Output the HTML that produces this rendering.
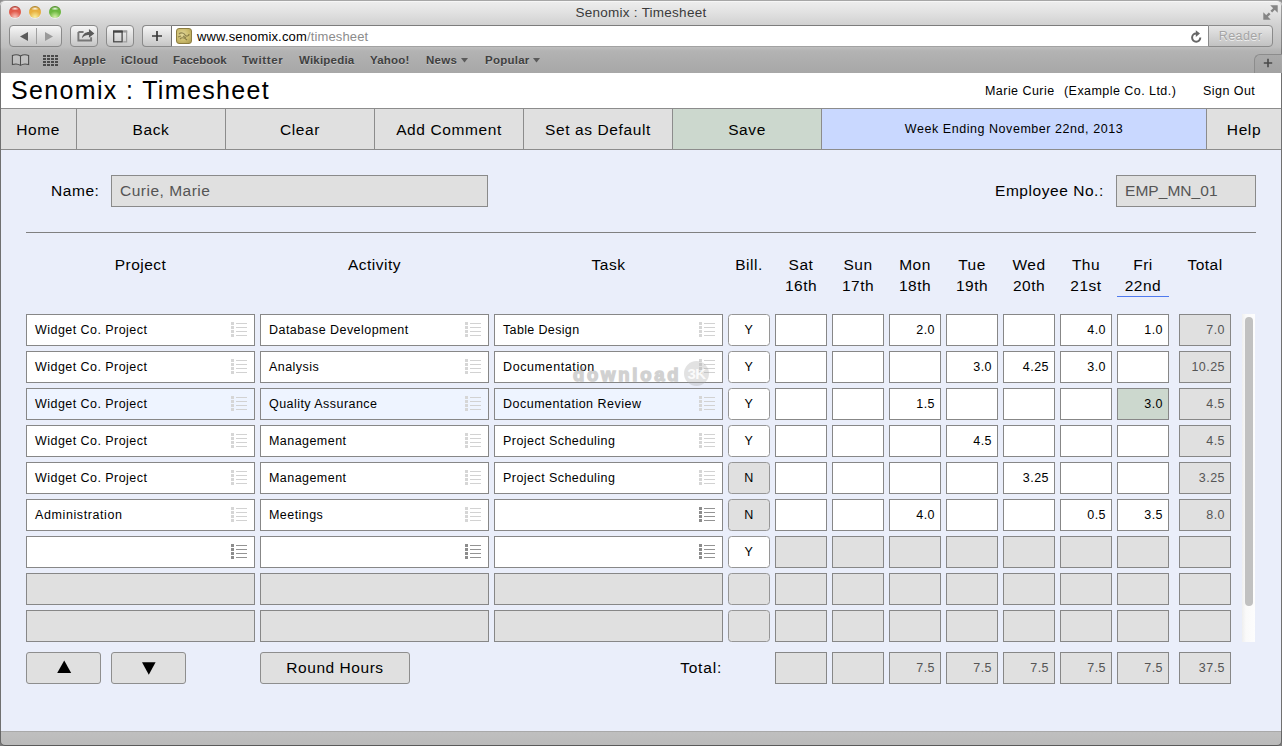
<!DOCTYPE html><html><head><meta charset="utf-8"><title>Senomix : Timesheet</title><style>
*{box-sizing:border-box;margin:0;padding:0}
html,body{width:1282px;height:746px;overflow:hidden;background:#eaeefa;font-family:"Liberation Sans",sans-serif;color:#000}
.abs{position:absolute}
#chrome{position:absolute;left:0;top:0;width:1282px;height:73px;background:linear-gradient(#eeeeee 0px,#e2e2e2 11px,#d1d1d1 24px,#bebebe 46px,#b3b3b3 50px,#a7a7a7 72px);border-top:1px solid #a6a6a6;border-radius:5px 5px 0 0;box-shadow:inset 0 1px 0 #f6f6f6,inset 1px 0 0 rgba(0,0,0,.32),inset -1px 0 0 rgba(0,0,0,.32)}
#chrome .title{position:absolute;left:0;width:1282px;top:4px;text-align:center;font-size:13.5px;letter-spacing:.25px;color:#3a3a3a}
.tl{position:absolute;top:5px;width:12px;height:12px;border-radius:6px}
.tb{position:absolute;top:24px;height:22px;border:1px solid #8a8a8a;border-radius:4px;background:linear-gradient(#f6f6f6,#c6c6c6)}
#url{position:absolute;left:172px;top:24px;width:1036px;height:22px;background:#fff;border-top:1px solid #7c7c7c;border-bottom:1px solid #a2a2a2}
#url span{position:absolute;left:25px;top:3px;font-size:13px;letter-spacing:.15px;color:#000;white-space:nowrap}
#url span i{font-style:normal;color:#8c8c8c}
#bm{position:absolute;left:0;top:49px;width:1282px;height:23px}
#bm span{position:absolute;top:4px;font-size:11.5px;font-weight:bold;color:#404040;letter-spacing:.25px;white-space:nowrap;text-shadow:0 1px 0 rgba(255,255,255,.35)}
#hdr{position:absolute;left:1px;top:73px;width:1280px;height:35px;background:#fff}
#hdr .t{position:absolute;left:10px;top:3px;font-size:25px;letter-spacing:1.35px;white-space:nowrap}
#hdr .u{position:absolute;top:11px;font-size:12.5px;letter-spacing:.45px;white-space:nowrap}
#menu{position:absolute;left:1px;top:108px;width:1280px;height:42px;background:#e0e0e0;border-top:1px solid #8c8c8c;border-bottom:1px solid #8c8c8c}
#menu div{position:absolute;top:0;height:40px;line-height:42px;text-align:center;font-size:15.5px;letter-spacing:.6px;border-right:1px solid #8c8c8c;white-space:nowrap}
.lbl{position:absolute;font-size:15.5px;letter-spacing:.55px;white-space:nowrap}
.fld{position:absolute;height:32px;border:1px solid #8a8a8a;background:#e0e0e0;font-size:15.5px;letter-spacing:.5px;color:#555;line-height:29px;padding-left:8px;white-space:nowrap}
.h{position:absolute;font-size:15.5px;letter-spacing:.5px;text-align:center;white-space:nowrap;line-height:21px}
.c{position:absolute;height:32px;border:1px solid #878787;background:#fff;font-size:12.5px;letter-spacing:.45px;line-height:30px;white-space:nowrap;overflow:hidden}
.c.t{padding-left:8px}
.c.n{text-align:right;padding-right:5px}
.c.b{text-align:center;border-radius:3.5px;border-color:#969696;color:#000}
.c.g{background:#e0e0e0;color:#555}
.c.b.g{color:#000}
.c.hl{background:#eef4ff}
.c.gr{background:#ccd8ce}
.ic{position:absolute;right:7px;top:7px;width:16px;height:16px}
.btn{position:absolute;height:32px;border:1px solid #8e8e8e;border-radius:3px;background:#e0e0e0;text-align:center;line-height:30px;font-size:15.5px;letter-spacing:.55px;white-space:nowrap}
</style></head><body>
<div class="abs" style="left:0;top:0;width:1282px;height:8px;background:#8f8f8f"></div>
<div id="chrome">
<div class="title">Senomix : Timesheet</div>
<div class="tl" style="left:9px;background:radial-gradient(ellipse 4px 1.8px at 50% 22%,rgba(255,255,255,.9),rgba(255,255,255,0)),radial-gradient(circle at 50% 92%,#f7c4bc 0%,#e15a4b 48%,#e15a4b 62%,#8f2c24 100%);box-shadow:0 1px 0 rgba(255,255,255,.5)"></div>
<div class="tl" style="left:29px;background:radial-gradient(ellipse 4px 1.8px at 50% 22%,rgba(255,255,255,.9),rgba(255,255,255,0)),radial-gradient(circle at 50% 92%,#f8f0a0 0%,#e8b040 48%,#e8b040 62%,#8a6410 100%);box-shadow:0 1px 0 rgba(255,255,255,.5)"></div>
<div class="tl" style="left:49px;background:radial-gradient(ellipse 4px 1.8px at 50% 22%,rgba(255,255,255,.9),rgba(255,255,255,0)),radial-gradient(circle at 50% 92%,#d4f0a8 0%,#6cb840 48%,#6cb840 62%,#3c7218 100%);box-shadow:0 1px 0 rgba(255,255,255,.5)"></div>
<div class="tb" style="left:9px;width:53px"><div class="abs" style="left:26px;top:2px;width:1px;height:16px;background:#a0a0a0"></div><svg class="abs" style="left:9px;top:6px" width="10" height="9" viewBox="0 0 10 9"><path d="M9 0 L9 9 L1 4.5Z" fill="#5a5a5a"/></svg><svg class="abs" style="left:34px;top:6px" width="10" height="9" viewBox="0 0 10 9"><path d="M1 0 L1 9 L9 4.5Z" fill="#9a9a9a"/></svg></div>
<div class="tb" style="left:70px;width:28px"><svg class="abs" style="left:5.5px;top:2px" width="18.5" height="14" viewBox="0 0 17 13"><path d="M1.2 3.8 H6 M1.2 3.8 V11.6 H13 V8.5" fill="none" stroke="#777" stroke-width="1.8"/><path d="M4.5 9.5 C5 5.5 8 3.6 11 3.6 V1 L16 5 L11 9 V6.4 C8.5 6.3 6.3 7 4.5 9.5Z" fill="#5a5a5a"/></svg></div>
<div class="tb" style="left:106px;width:28px"><svg class="abs" style="left:6px;top:3.5px" width="15" height="13" viewBox="0 0 15 13"><rect x="0.7" y="1.6" width="8.4" height="10.2" fill="none" stroke="#4a4a4a" stroke-width="1.3"/><rect x="0" y="0.3" width="9.8" height="2.3" fill="#444"/><path d="M10.2 1.4 H13.6 V11.8 H10.2" fill="none" stroke="#9c9c9c" stroke-width="1.2"/><rect x="10.2" y="0.3" width="4" height="2.3" fill="#9c9c9c"/></svg></div>
<div class="tb" style="left:142px;width:30px;border-radius:4px 0 0 4px;border-right-color:#707070"><svg class="abs" style="left:8.5px;top:5px" width="10" height="10" viewBox="0 0 10 10"><path d="M5 0 V10 M0 5 H10" stroke="#3a3a3a" stroke-width="1.7"/></svg></div>
<div id="url"><div class="abs" style="left:4px;top:2px;width:16px;height:16px;border-radius:3px;background:radial-gradient(circle at 40% 40%,#e2d79a,#cbbb6c 55%,#a8974e);border:1px solid #8d7d40;overflow:hidden"><svg width="14" height="13" viewBox="0 0 14 13"><path d="M2 4 C4 2 7 3 8 5 S12 6 12 4 M3 9 C5 7 8 8 10 10 M6 6 L9 8 M1 7 L4 6" fill="none" stroke="#5e5428" stroke-width="1.2" opacity=".6"/></svg></div><span>www.senomix.com<i>/timesheet</i></span><svg class="abs" style="left:1018px;top:4px" width="13" height="14" viewBox="0 0 13 14"><path d="M10.3 7.6 A4.1 4.1 0 1 1 6.2 3.5" fill="none" stroke="#666" stroke-width="2"/><path d="M5.8 0.2 L10 3.6 L5.8 6.9Z" fill="#666"/></svg></div>
<div class="tb" style="left:1208px;width:65px;border-radius:0 4px 4px 0;background:linear-gradient(#e6e6e6,#c2c2c2);font-size:12.5px;letter-spacing:.4px;color:#a4a4a4;text-align:center;line-height:20px;text-shadow:0 1px 0 rgba(255,255,255,.7)">Reader</div>
<svg class="abs" style="left:1263px;top:4px" width="15" height="15" viewBox="0 0 15 15"><path d="M7.2 0.3 H14.7 V7.8 Z M0.3 7.2 V14.7 H7.8 Z" fill="#858585"/><path d="M12 3 L8.3 6.7 M3 12 L6.7 8.3" stroke="#858585" stroke-width="2.4"/></svg>
<div id="bm">
<svg class="abs" style="left:11px;top:4px" width="19" height="13" viewBox="0 0 19 13"><path d="M9.5 2 C7.2 0.5 3.8 0.5 1.4 1.4 V10.6 C3.8 9.8 7.2 9.8 9.5 11.4 C11.8 9.8 15.2 9.8 17.6 10.6 V1.4 C15.2 0.5 11.8 0.5 9.5 2 V11.4" fill="rgba(255,255,255,.22)" stroke="#4c4c4c" stroke-width="1.05"/></svg>
<svg class="abs" style="left:43px;top:4.5px" width="16" height="12" viewBox="0 0 16 12"><rect x="0" y="0" width="3" height="2" fill="#4a4a4a"/><rect x="4" y="0" width="3" height="2" fill="#4a4a4a"/><rect x="8" y="0" width="3" height="2" fill="#4a4a4a"/><rect x="12" y="0" width="3" height="2" fill="#4a4a4a"/><rect x="0" y="3" width="3" height="2" fill="#4a4a4a"/><rect x="4" y="3" width="3" height="2" fill="#4a4a4a"/><rect x="8" y="3" width="3" height="2" fill="#4a4a4a"/><rect x="12" y="3" width="3" height="2" fill="#4a4a4a"/><rect x="0" y="6" width="3" height="2" fill="#4a4a4a"/><rect x="4" y="6" width="3" height="2" fill="#4a4a4a"/><rect x="8" y="6" width="3" height="2" fill="#4a4a4a"/><rect x="12" y="6" width="3" height="2" fill="#4a4a4a"/><rect x="0" y="9" width="3" height="2" fill="#4a4a4a"/><rect x="4" y="9" width="3" height="2" fill="#4a4a4a"/><rect x="8" y="9" width="3" height="2" fill="#4a4a4a"/><rect x="12" y="9" width="3" height="2" fill="#4a4a4a"/></svg>
<span style="left:73px;letter-spacing:0.25px">Apple</span>
<span style="left:121px;letter-spacing:0.25px">iCloud</span>
<span style="left:173px;letter-spacing:0px">Facebook</span>
<span style="left:242px;letter-spacing:0.65px">Twitter</span>
<span style="left:299px;letter-spacing:0.2px">Wikipedia</span>
<span style="left:370px;letter-spacing:0.2px">Yahoo!</span>
<span style="left:426px;letter-spacing:0.25px">News</span>
<span style="left:485px;letter-spacing:0.25px">Popular</span>
<svg class="abs" style="left:461px;top:8px" width="7" height="5" viewBox="0 0 7 5"><path d="M0 0 H7 L3.5 4.6Z" fill="#5a5a5a"/></svg>
<svg class="abs" style="left:533px;top:8px" width="7" height="5" viewBox="0 0 7 5"><path d="M0 0 H7 L3.5 4.6Z" fill="#5a5a5a"/></svg>
<div class="abs" style="left:1254px;top:4px;width:28px;height:19px;border-left:1px solid #8c8c8c;border-top:1px solid #8c8c8c;border-radius:6px 0 0 0;background:linear-gradient(#aaa,#a2a2a2)"><svg class="abs" style="left:8px;top:3px" width="10" height="10" viewBox="0 0 10 10"><path d="M5 0.8 V9.2 M0.8 5 H9.2" stroke="#4a4a4a" stroke-width="1.6"/></svg></div>
</div>
<div class="abs" style="left:0;top:72px;width:1282px;height:1px;background:#8e8e8e"></div>
</div>
<div id="hdr"><div class="t">Senomix : Timesheet</div><div class="u" style="left:984px">Marie Curie</div><div class="u" style="left:1063px">(Example Co. Ltd.)</div><div class="u" style="left:1202px">Sign Out</div></div>
<div id="menu">
<div style="left:-1px;width:77px;">Home</div>
<div style="left:76px;width:149px;">Back</div>
<div style="left:225px;width:149px;">Clear</div>
<div style="left:374px;width:149px;">Add Comment</div>
<div style="left:523px;width:149px;">Set as Default</div>
<div style="left:672px;width:149px;background:#ccd8ce;">Save</div>
<div style="left:821px;width:385px;background:#c9d8ff;font-size:12.5px;letter-spacing:.55px;line-height:40px;">Week Ending November 22nd, 2013</div>
<div style="left:1206px;width:74px;border-right:0;">Help</div>
</div>
<div class="lbl" style="left:51px;top:182px">Name:</div>
<div class="fld" style="left:111px;top:175px;width:377px">Curie, Marie</div>
<div class="lbl" style="left:995px;top:182px">Employee No.:</div>
<div class="fld" style="left:1116px;top:175px;width:140px;letter-spacing:.05px">EMP_MN_01</div>
<div class="abs" style="left:26px;top:232px;width:1230px;height:1px;background:#808080"></div>
<div class="h" style="left:26px;top:254px;width:229px">Project</div>
<div class="h" style="left:260px;top:254px;width:229px">Activity</div>
<div class="h" style="left:494px;top:254px;width:229px">Task</div>
<div class="h" style="left:728px;top:254px;width:42px">Bill.</div>
<div class="h" style="left:775px;top:254px;width:52px">Sat<br>16th</div>
<div class="h" style="left:832px;top:254px;width:52px">Sun<br>17th</div>
<div class="h" style="left:889px;top:254px;width:52px">Mon<br>18th</div>
<div class="h" style="left:946px;top:254px;width:52px">Tue<br>19th</div>
<div class="h" style="left:1003px;top:254px;width:52px">Wed<br>20th</div>
<div class="h" style="left:1060px;top:254px;width:52px">Thu<br>21st</div>
<div class="h" style="left:1117px;top:254px;width:52px">Fri<br>22nd</div>
<div class="h" style="left:1179px;top:254px;width:52px">Total</div>
<div class="abs" style="left:1117px;top:296px;width:52px;height:1px;background:#4f7aee"></div>
<div class="c t" style="left:26px;top:314px;width:229px">Widget Co. Project<svg class="ic" viewBox="0 0 16 16" shape-rendering="crispEdges"><rect x="0" y="0" width="3" height="3" fill="#d6d6d6"/><rect x="5" y="1" width="11" height="1" fill="#d2d2d2"/><rect x="0" y="4" width="3" height="3" fill="#d6d6d6"/><rect x="5" y="5" width="11" height="1" fill="#d2d2d2"/><rect x="0" y="8" width="3" height="3" fill="#d6d6d6"/><rect x="5" y="9" width="11" height="1" fill="#d2d2d2"/><rect x="0" y="12" width="3" height="3" fill="#d6d6d6"/><rect x="5" y="13" width="11" height="1" fill="#d2d2d2"/></svg></div>
<div class="c t" style="left:260px;top:314px;width:229px">Database Development<svg class="ic" viewBox="0 0 16 16" shape-rendering="crispEdges"><rect x="0" y="0" width="3" height="3" fill="#d6d6d6"/><rect x="5" y="1" width="11" height="1" fill="#d2d2d2"/><rect x="0" y="4" width="3" height="3" fill="#d6d6d6"/><rect x="5" y="5" width="11" height="1" fill="#d2d2d2"/><rect x="0" y="8" width="3" height="3" fill="#d6d6d6"/><rect x="5" y="9" width="11" height="1" fill="#d2d2d2"/><rect x="0" y="12" width="3" height="3" fill="#d6d6d6"/><rect x="5" y="13" width="11" height="1" fill="#d2d2d2"/></svg></div>
<div class="c t" style="left:494px;top:314px;width:229px;letter-spacing:0.35px">Table Design<svg class="ic" viewBox="0 0 16 16" shape-rendering="crispEdges"><rect x="0" y="0" width="3" height="3" fill="#d6d6d6"/><rect x="5" y="1" width="11" height="1" fill="#d2d2d2"/><rect x="0" y="4" width="3" height="3" fill="#d6d6d6"/><rect x="5" y="5" width="11" height="1" fill="#d2d2d2"/><rect x="0" y="8" width="3" height="3" fill="#d6d6d6"/><rect x="5" y="9" width="11" height="1" fill="#d2d2d2"/><rect x="0" y="12" width="3" height="3" fill="#d6d6d6"/><rect x="5" y="13" width="11" height="1" fill="#d2d2d2"/></svg></div>
<div class="c b" style="left:728px;top:314px;width:42px;">Y</div>
<div class="c n" style="left:775px;top:314px;width:52px"></div>
<div class="c n" style="left:832px;top:314px;width:52px"></div>
<div class="c n" style="left:889px;top:314px;width:52px">2.0</div>
<div class="c n" style="left:946px;top:314px;width:52px"></div>
<div class="c n" style="left:1003px;top:314px;width:52px"></div>
<div class="c n" style="left:1060px;top:314px;width:52px">4.0</div>
<div class="c n" style="left:1117px;top:314px;width:52px">1.0</div>
<div class="c n g" style="left:1179px;top:314px;width:52px">7.0</div>
<div class="c t" style="left:26px;top:351px;width:229px">Widget Co. Project<svg class="ic" viewBox="0 0 16 16" shape-rendering="crispEdges"><rect x="0" y="0" width="3" height="3" fill="#d6d6d6"/><rect x="5" y="1" width="11" height="1" fill="#d2d2d2"/><rect x="0" y="4" width="3" height="3" fill="#d6d6d6"/><rect x="5" y="5" width="11" height="1" fill="#d2d2d2"/><rect x="0" y="8" width="3" height="3" fill="#d6d6d6"/><rect x="5" y="9" width="11" height="1" fill="#d2d2d2"/><rect x="0" y="12" width="3" height="3" fill="#d6d6d6"/><rect x="5" y="13" width="11" height="1" fill="#d2d2d2"/></svg></div>
<div class="c t" style="left:260px;top:351px;width:229px">Analysis<svg class="ic" viewBox="0 0 16 16" shape-rendering="crispEdges"><rect x="0" y="0" width="3" height="3" fill="#d6d6d6"/><rect x="5" y="1" width="11" height="1" fill="#d2d2d2"/><rect x="0" y="4" width="3" height="3" fill="#d6d6d6"/><rect x="5" y="5" width="11" height="1" fill="#d2d2d2"/><rect x="0" y="8" width="3" height="3" fill="#d6d6d6"/><rect x="5" y="9" width="11" height="1" fill="#d2d2d2"/><rect x="0" y="12" width="3" height="3" fill="#d6d6d6"/><rect x="5" y="13" width="11" height="1" fill="#d2d2d2"/></svg></div>
<div class="c t" style="left:494px;top:351px;width:229px;letter-spacing:0.6px">Documentation<svg class="ic" viewBox="0 0 16 16" shape-rendering="crispEdges"><rect x="0" y="0" width="3" height="3" fill="#d6d6d6"/><rect x="5" y="1" width="11" height="1" fill="#d2d2d2"/><rect x="0" y="4" width="3" height="3" fill="#d6d6d6"/><rect x="5" y="5" width="11" height="1" fill="#d2d2d2"/><rect x="0" y="8" width="3" height="3" fill="#d6d6d6"/><rect x="5" y="9" width="11" height="1" fill="#d2d2d2"/><rect x="0" y="12" width="3" height="3" fill="#d6d6d6"/><rect x="5" y="13" width="11" height="1" fill="#d2d2d2"/></svg></div>
<div class="c b" style="left:728px;top:351px;width:42px;">Y</div>
<div class="c n" style="left:775px;top:351px;width:52px"></div>
<div class="c n" style="left:832px;top:351px;width:52px"></div>
<div class="c n" style="left:889px;top:351px;width:52px"></div>
<div class="c n" style="left:946px;top:351px;width:52px">3.0</div>
<div class="c n" style="left:1003px;top:351px;width:52px">4.25</div>
<div class="c n" style="left:1060px;top:351px;width:52px">3.0</div>
<div class="c n" style="left:1117px;top:351px;width:52px"></div>
<div class="c n g" style="left:1179px;top:351px;width:52px">10.25</div>
<div class="c t hl" style="left:26px;top:388px;width:229px">Widget Co. Project<svg class="ic" viewBox="0 0 16 16" shape-rendering="crispEdges"><rect x="0" y="0" width="3" height="3" fill="#d6d6d6"/><rect x="5" y="1" width="11" height="1" fill="#d2d2d2"/><rect x="0" y="4" width="3" height="3" fill="#d6d6d6"/><rect x="5" y="5" width="11" height="1" fill="#d2d2d2"/><rect x="0" y="8" width="3" height="3" fill="#d6d6d6"/><rect x="5" y="9" width="11" height="1" fill="#d2d2d2"/><rect x="0" y="12" width="3" height="3" fill="#d6d6d6"/><rect x="5" y="13" width="11" height="1" fill="#d2d2d2"/></svg></div>
<div class="c t hl" style="left:260px;top:388px;width:229px">Quality Assurance<svg class="ic" viewBox="0 0 16 16" shape-rendering="crispEdges"><rect x="0" y="0" width="3" height="3" fill="#d6d6d6"/><rect x="5" y="1" width="11" height="1" fill="#d2d2d2"/><rect x="0" y="4" width="3" height="3" fill="#d6d6d6"/><rect x="5" y="5" width="11" height="1" fill="#d2d2d2"/><rect x="0" y="8" width="3" height="3" fill="#d6d6d6"/><rect x="5" y="9" width="11" height="1" fill="#d2d2d2"/><rect x="0" y="12" width="3" height="3" fill="#d6d6d6"/><rect x="5" y="13" width="11" height="1" fill="#d2d2d2"/></svg></div>
<div class="c t hl" style="left:494px;top:388px;width:229px;letter-spacing:0.5px">Documentation Review<svg class="ic" viewBox="0 0 16 16" shape-rendering="crispEdges"><rect x="0" y="0" width="3" height="3" fill="#d6d6d6"/><rect x="5" y="1" width="11" height="1" fill="#d2d2d2"/><rect x="0" y="4" width="3" height="3" fill="#d6d6d6"/><rect x="5" y="5" width="11" height="1" fill="#d2d2d2"/><rect x="0" y="8" width="3" height="3" fill="#d6d6d6"/><rect x="5" y="9" width="11" height="1" fill="#d2d2d2"/><rect x="0" y="12" width="3" height="3" fill="#d6d6d6"/><rect x="5" y="13" width="11" height="1" fill="#d2d2d2"/></svg></div>
<div class="c b" style="left:728px;top:388px;width:42px;">Y</div>
<div class="c n" style="left:775px;top:388px;width:52px"></div>
<div class="c n" style="left:832px;top:388px;width:52px"></div>
<div class="c n" style="left:889px;top:388px;width:52px">1.5</div>
<div class="c n" style="left:946px;top:388px;width:52px"></div>
<div class="c n" style="left:1003px;top:388px;width:52px"></div>
<div class="c n" style="left:1060px;top:388px;width:52px"></div>
<div class="c n gr" style="left:1117px;top:388px;width:52px">3.0</div>
<div class="c n g" style="left:1179px;top:388px;width:52px">4.5</div>
<div class="c t" style="left:26px;top:425px;width:229px">Widget Co. Project<svg class="ic" viewBox="0 0 16 16" shape-rendering="crispEdges"><rect x="0" y="0" width="3" height="3" fill="#d6d6d6"/><rect x="5" y="1" width="11" height="1" fill="#d2d2d2"/><rect x="0" y="4" width="3" height="3" fill="#d6d6d6"/><rect x="5" y="5" width="11" height="1" fill="#d2d2d2"/><rect x="0" y="8" width="3" height="3" fill="#d6d6d6"/><rect x="5" y="9" width="11" height="1" fill="#d2d2d2"/><rect x="0" y="12" width="3" height="3" fill="#d6d6d6"/><rect x="5" y="13" width="11" height="1" fill="#d2d2d2"/></svg></div>
<div class="c t" style="left:260px;top:425px;width:229px">Management<svg class="ic" viewBox="0 0 16 16" shape-rendering="crispEdges"><rect x="0" y="0" width="3" height="3" fill="#d6d6d6"/><rect x="5" y="1" width="11" height="1" fill="#d2d2d2"/><rect x="0" y="4" width="3" height="3" fill="#d6d6d6"/><rect x="5" y="5" width="11" height="1" fill="#d2d2d2"/><rect x="0" y="8" width="3" height="3" fill="#d6d6d6"/><rect x="5" y="9" width="11" height="1" fill="#d2d2d2"/><rect x="0" y="12" width="3" height="3" fill="#d6d6d6"/><rect x="5" y="13" width="11" height="1" fill="#d2d2d2"/></svg></div>
<div class="c t" style="left:494px;top:425px;width:229px">Project Scheduling<svg class="ic" viewBox="0 0 16 16" shape-rendering="crispEdges"><rect x="0" y="0" width="3" height="3" fill="#d6d6d6"/><rect x="5" y="1" width="11" height="1" fill="#d2d2d2"/><rect x="0" y="4" width="3" height="3" fill="#d6d6d6"/><rect x="5" y="5" width="11" height="1" fill="#d2d2d2"/><rect x="0" y="8" width="3" height="3" fill="#d6d6d6"/><rect x="5" y="9" width="11" height="1" fill="#d2d2d2"/><rect x="0" y="12" width="3" height="3" fill="#d6d6d6"/><rect x="5" y="13" width="11" height="1" fill="#d2d2d2"/></svg></div>
<div class="c b" style="left:728px;top:425px;width:42px;">Y</div>
<div class="c n" style="left:775px;top:425px;width:52px"></div>
<div class="c n" style="left:832px;top:425px;width:52px"></div>
<div class="c n" style="left:889px;top:425px;width:52px"></div>
<div class="c n" style="left:946px;top:425px;width:52px">4.5</div>
<div class="c n" style="left:1003px;top:425px;width:52px"></div>
<div class="c n" style="left:1060px;top:425px;width:52px"></div>
<div class="c n" style="left:1117px;top:425px;width:52px"></div>
<div class="c n g" style="left:1179px;top:425px;width:52px">4.5</div>
<div class="c t" style="left:26px;top:462px;width:229px">Widget Co. Project<svg class="ic" viewBox="0 0 16 16" shape-rendering="crispEdges"><rect x="0" y="0" width="3" height="3" fill="#d6d6d6"/><rect x="5" y="1" width="11" height="1" fill="#d2d2d2"/><rect x="0" y="4" width="3" height="3" fill="#d6d6d6"/><rect x="5" y="5" width="11" height="1" fill="#d2d2d2"/><rect x="0" y="8" width="3" height="3" fill="#d6d6d6"/><rect x="5" y="9" width="11" height="1" fill="#d2d2d2"/><rect x="0" y="12" width="3" height="3" fill="#d6d6d6"/><rect x="5" y="13" width="11" height="1" fill="#d2d2d2"/></svg></div>
<div class="c t" style="left:260px;top:462px;width:229px">Management<svg class="ic" viewBox="0 0 16 16" shape-rendering="crispEdges"><rect x="0" y="0" width="3" height="3" fill="#d6d6d6"/><rect x="5" y="1" width="11" height="1" fill="#d2d2d2"/><rect x="0" y="4" width="3" height="3" fill="#d6d6d6"/><rect x="5" y="5" width="11" height="1" fill="#d2d2d2"/><rect x="0" y="8" width="3" height="3" fill="#d6d6d6"/><rect x="5" y="9" width="11" height="1" fill="#d2d2d2"/><rect x="0" y="12" width="3" height="3" fill="#d6d6d6"/><rect x="5" y="13" width="11" height="1" fill="#d2d2d2"/></svg></div>
<div class="c t" style="left:494px;top:462px;width:229px">Project Scheduling<svg class="ic" viewBox="0 0 16 16" shape-rendering="crispEdges"><rect x="0" y="0" width="3" height="3" fill="#d6d6d6"/><rect x="5" y="1" width="11" height="1" fill="#d2d2d2"/><rect x="0" y="4" width="3" height="3" fill="#d6d6d6"/><rect x="5" y="5" width="11" height="1" fill="#d2d2d2"/><rect x="0" y="8" width="3" height="3" fill="#d6d6d6"/><rect x="5" y="9" width="11" height="1" fill="#d2d2d2"/><rect x="0" y="12" width="3" height="3" fill="#d6d6d6"/><rect x="5" y="13" width="11" height="1" fill="#d2d2d2"/></svg></div>
<div class="c b g" style="left:728px;top:462px;width:42px;">N</div>
<div class="c n" style="left:775px;top:462px;width:52px"></div>
<div class="c n" style="left:832px;top:462px;width:52px"></div>
<div class="c n" style="left:889px;top:462px;width:52px"></div>
<div class="c n" style="left:946px;top:462px;width:52px"></div>
<div class="c n" style="left:1003px;top:462px;width:52px">3.25</div>
<div class="c n" style="left:1060px;top:462px;width:52px"></div>
<div class="c n" style="left:1117px;top:462px;width:52px"></div>
<div class="c n g" style="left:1179px;top:462px;width:52px">3.25</div>
<div class="c t" style="left:26px;top:499px;width:229px;letter-spacing:0.6px">Administration<svg class="ic" viewBox="0 0 16 16" shape-rendering="crispEdges"><rect x="0" y="0" width="3" height="3" fill="#d6d6d6"/><rect x="5" y="1" width="11" height="1" fill="#d2d2d2"/><rect x="0" y="4" width="3" height="3" fill="#d6d6d6"/><rect x="5" y="5" width="11" height="1" fill="#d2d2d2"/><rect x="0" y="8" width="3" height="3" fill="#d6d6d6"/><rect x="5" y="9" width="11" height="1" fill="#d2d2d2"/><rect x="0" y="12" width="3" height="3" fill="#d6d6d6"/><rect x="5" y="13" width="11" height="1" fill="#d2d2d2"/></svg></div>
<div class="c t" style="left:260px;top:499px;width:229px">Meetings<svg class="ic" viewBox="0 0 16 16" shape-rendering="crispEdges"><rect x="0" y="0" width="3" height="3" fill="#d6d6d6"/><rect x="5" y="1" width="11" height="1" fill="#d2d2d2"/><rect x="0" y="4" width="3" height="3" fill="#d6d6d6"/><rect x="5" y="5" width="11" height="1" fill="#d2d2d2"/><rect x="0" y="8" width="3" height="3" fill="#d6d6d6"/><rect x="5" y="9" width="11" height="1" fill="#d2d2d2"/><rect x="0" y="12" width="3" height="3" fill="#d6d6d6"/><rect x="5" y="13" width="11" height="1" fill="#d2d2d2"/></svg></div>
<div class="c t" style="left:494px;top:499px;width:229px"><svg class="ic" viewBox="0 0 16 16" shape-rendering="crispEdges"><rect x="0" y="0" width="3" height="3" fill="#8c8c8c"/><rect x="5" y="1" width="11" height="1" fill="#939393"/><rect x="0" y="4" width="3" height="3" fill="#8c8c8c"/><rect x="5" y="5" width="11" height="1" fill="#939393"/><rect x="0" y="8" width="3" height="3" fill="#8c8c8c"/><rect x="5" y="9" width="11" height="1" fill="#939393"/><rect x="0" y="12" width="3" height="3" fill="#8c8c8c"/><rect x="5" y="13" width="11" height="1" fill="#939393"/></svg></div>
<div class="c b g" style="left:728px;top:499px;width:42px;">N</div>
<div class="c n" style="left:775px;top:499px;width:52px"></div>
<div class="c n" style="left:832px;top:499px;width:52px"></div>
<div class="c n" style="left:889px;top:499px;width:52px">4.0</div>
<div class="c n" style="left:946px;top:499px;width:52px"></div>
<div class="c n" style="left:1003px;top:499px;width:52px"></div>
<div class="c n" style="left:1060px;top:499px;width:52px">0.5</div>
<div class="c n" style="left:1117px;top:499px;width:52px">3.5</div>
<div class="c n g" style="left:1179px;top:499px;width:52px">8.0</div>
<div class="c t" style="left:26px;top:536px;width:229px"><svg class="ic" viewBox="0 0 16 16" shape-rendering="crispEdges"><rect x="0" y="0" width="3" height="3" fill="#8c8c8c"/><rect x="5" y="1" width="11" height="1" fill="#939393"/><rect x="0" y="4" width="3" height="3" fill="#8c8c8c"/><rect x="5" y="5" width="11" height="1" fill="#939393"/><rect x="0" y="8" width="3" height="3" fill="#8c8c8c"/><rect x="5" y="9" width="11" height="1" fill="#939393"/><rect x="0" y="12" width="3" height="3" fill="#8c8c8c"/><rect x="5" y="13" width="11" height="1" fill="#939393"/></svg></div>
<div class="c t" style="left:260px;top:536px;width:229px"><svg class="ic" viewBox="0 0 16 16" shape-rendering="crispEdges"><rect x="0" y="0" width="3" height="3" fill="#8c8c8c"/><rect x="5" y="1" width="11" height="1" fill="#939393"/><rect x="0" y="4" width="3" height="3" fill="#8c8c8c"/><rect x="5" y="5" width="11" height="1" fill="#939393"/><rect x="0" y="8" width="3" height="3" fill="#8c8c8c"/><rect x="5" y="9" width="11" height="1" fill="#939393"/><rect x="0" y="12" width="3" height="3" fill="#8c8c8c"/><rect x="5" y="13" width="11" height="1" fill="#939393"/></svg></div>
<div class="c t" style="left:494px;top:536px;width:229px"><svg class="ic" viewBox="0 0 16 16" shape-rendering="crispEdges"><rect x="0" y="0" width="3" height="3" fill="#8c8c8c"/><rect x="5" y="1" width="11" height="1" fill="#939393"/><rect x="0" y="4" width="3" height="3" fill="#8c8c8c"/><rect x="5" y="5" width="11" height="1" fill="#939393"/><rect x="0" y="8" width="3" height="3" fill="#8c8c8c"/><rect x="5" y="9" width="11" height="1" fill="#939393"/><rect x="0" y="12" width="3" height="3" fill="#8c8c8c"/><rect x="5" y="13" width="11" height="1" fill="#939393"/></svg></div>
<div class="c b" style="left:728px;top:536px;width:42px;">Y</div>
<div class="c g" style="left:775px;top:536px;width:52px"></div>
<div class="c g" style="left:832px;top:536px;width:52px"></div>
<div class="c g" style="left:889px;top:536px;width:52px"></div>
<div class="c g" style="left:946px;top:536px;width:52px"></div>
<div class="c g" style="left:1003px;top:536px;width:52px"></div>
<div class="c g" style="left:1060px;top:536px;width:52px"></div>
<div class="c g" style="left:1117px;top:536px;width:52px"></div>
<div class="c n g" style="left:1179px;top:536px;width:52px"></div>
<div class="c g" style="left:26px;top:573px;width:229px"></div>
<div class="c g" style="left:260px;top:573px;width:229px"></div>
<div class="c g" style="left:494px;top:573px;width:229px"></div>
<div class="c b g" style="left:728px;top:573px;width:42px"></div>
<div class="c g" style="left:775px;top:573px;width:52px"></div>
<div class="c g" style="left:832px;top:573px;width:52px"></div>
<div class="c g" style="left:889px;top:573px;width:52px"></div>
<div class="c g" style="left:946px;top:573px;width:52px"></div>
<div class="c g" style="left:1003px;top:573px;width:52px"></div>
<div class="c g" style="left:1060px;top:573px;width:52px"></div>
<div class="c g" style="left:1117px;top:573px;width:52px"></div>
<div class="c n g" style="left:1179px;top:573px;width:52px"></div>
<div class="c g" style="left:26px;top:610px;width:229px"></div>
<div class="c g" style="left:260px;top:610px;width:229px"></div>
<div class="c g" style="left:494px;top:610px;width:229px"></div>
<div class="c b g" style="left:728px;top:610px;width:42px"></div>
<div class="c g" style="left:775px;top:610px;width:52px"></div>
<div class="c g" style="left:832px;top:610px;width:52px"></div>
<div class="c g" style="left:889px;top:610px;width:52px"></div>
<div class="c g" style="left:946px;top:610px;width:52px"></div>
<div class="c g" style="left:1003px;top:610px;width:52px"></div>
<div class="c g" style="left:1060px;top:610px;width:52px"></div>
<div class="c g" style="left:1117px;top:610px;width:52px"></div>
<div class="c n g" style="left:1179px;top:610px;width:52px"></div>
<div class="abs" style="left:1242px;top:314px;width:13px;height:328px;background:linear-gradient(90deg,#efefef,#fafafa 4px,#fdfdfd)"></div>
<div class="abs" style="left:1245px;top:317px;width:8px;height:289px;border-radius:4px;background:#c1c1c1"></div>
<div class="btn" style="left:26px;top:652px;width:75px"><svg class="abs" style="left:30px;top:7px" width="15" height="14" viewBox="0 0 15 14"><path d="M0.2 13 L14.2 13 L7.2 0.5Z" fill="#000"/></svg></div>
<div class="btn" style="left:111px;top:652px;width:75px"><svg class="abs" style="left:30px;top:9px" width="15" height="14" viewBox="0 0 15 14"><path d="M0 0.2 L13.6 0.2 L6.8 12.7Z" fill="#000"/></svg></div>
<div class="btn" style="left:260px;top:652px;width:150px">Round Hours</div>
<div class="lbl" style="left:620px;top:659px;width:102px;text-align:right;letter-spacing:.8px">Total:</div>
<div class="c n g" style="left:775px;top:652px;width:52px"></div>
<div class="c n g" style="left:832px;top:652px;width:52px"></div>
<div class="c n g" style="left:889px;top:652px;width:52px">7.5</div>
<div class="c n g" style="left:946px;top:652px;width:52px">7.5</div>
<div class="c n g" style="left:1003px;top:652px;width:52px">7.5</div>
<div class="c n g" style="left:1060px;top:652px;width:52px">7.5</div>
<div class="c n g" style="left:1117px;top:652px;width:52px">7.5</div>
<div class="c n g" style="left:1179px;top:652px;width:52px">37.5</div>
<div class="abs" style="left:573px;top:365px;line-height:20px;font-size:18.5px;font-weight:bold;letter-spacing:2.75px;color:#999;-webkit-text-stroke:1.4px #999;opacity:.44;white-space:nowrap">download</div>
<div class="abs" style="left:684px;top:361px;width:25px;height:25px;border-radius:13px;background:rgba(170,170,170,.34);color:rgba(255,255,255,.85);font-size:15px;font-weight:bold;line-height:25px;text-align:center;letter-spacing:-.5px">3K</div>
<div class="abs" style="left:0;top:73px;width:1px;height:673px;background:#707070"></div>
<div class="abs" style="left:1281px;top:73px;width:1px;height:673px;background:#707070"></div>
<div class="abs" style="left:0;top:738px;width:1282px;height:8px;background:#7c7c7c"></div><div class="abs" style="left:0;top:731px;width:1282px;height:15px;background:linear-gradient(#a9a9a9 0,#a9a9a9 1px,#bfbfbf 1px,#bababa 100%);border:1px solid #666;border-top:0;border-bottom-color:#5a5a5a;border-radius:0 0 5px 5px"></div>
</body></html>
